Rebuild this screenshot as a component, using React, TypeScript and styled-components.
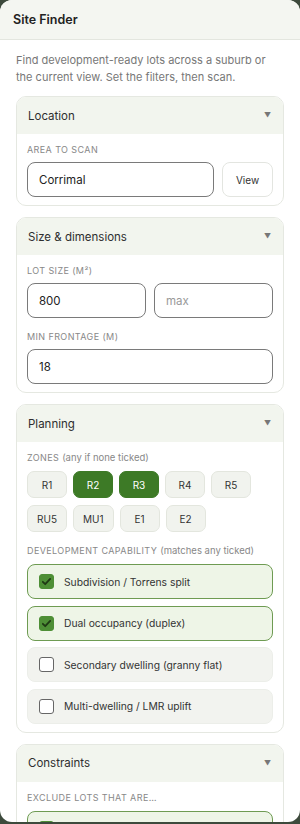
import styled, { createGlobalStyle } from 'styled-components'

const GlobalStyle = createGlobalStyle`
  * { box-sizing: border-box; }
  body {
    margin: 0;
    background: #3d4a3c;
    font-family: Inter, "Liberation Sans", sans-serif;
  }
`

const Panel = styled.div`
  width: 300px;
  height: 822px;
  background: #ffffff;
  border-radius: 12px;
  overflow: hidden;
`

const PanelHeader = styled.div`
  height: 40px;
  display: flex;
  align-items: center;
  padding: 0 13px;
  background: #f4f6f1;
  border-bottom: 1px solid #e3e6df;
  font-size: 12.5px;
  font-weight: 600;
  color: #222;
`

const PanelBody = styled.div`
  padding: 12px 16px;
  display: flex;
  flex-direction: column;
  gap: 11px;
`

const Intro = styled.p`
  margin: 0 0 -1px;
  font-size: 11px;
  line-height: 17px;
  color: #777;
`

const Card = styled.section`
  flex-shrink: 0;
  border: 1px solid #e5e8e1;
  border-radius: 10px;
  overflow: hidden;
`

const CardHeader = styled.div`
  height: 37px;
  display: flex;
  align-items: center;
  justify-content: space-between;
  padding: 0 12px 0 11px;
  background: #f2f5ee;
  font-size: 11.5px;
  color: #2e2e2e;
`

const Caret = styled.span`
  font-size: 7px;
  color: #777;
`

const CardBody = styled.div`
  padding: 9px 10px 8px;
  display: flex;
  flex-direction: column;
  gap: 12px;
`

const Field = styled.div`
  display: flex;
  flex-direction: column;
  gap: 6px;
`

const Label = styled.div`
  font-size: 9px;
  line-height: 13px;
  letter-spacing: 0.4px;
  text-transform: uppercase;
  color: #888;

  small {
    font-size: 9.5px;
    letter-spacing: 0;
    text-transform: none;
  }
`

const Row = styled.div<{ $cols: string }>`
  display: grid;
  grid-template-columns: ${p => p.$cols};
  gap: 8px;
`

const Input = styled.div<{ $placeholder?: boolean }>`
  height: 35px;
  display: flex;
  align-items: center;
  padding: 0 11px;
  border: 1px solid #7a7a7a;
  border-radius: 8px;
  font-size: 11.5px;
  color: ${p => (p.$placeholder ? '#999' : '#222')};
`

const Button = styled.div`
  height: 35px;
  display: flex;
  align-items: center;
  justify-content: center;
  border: 1px solid #e3e5e0;
  border-radius: 8px;
  font-size: 10px;
  color: #333;
`

const Chips = styled.div`
  display: flex;
  flex-wrap: wrap;
  gap: 7px 6px;
  margin-top: 1px;
`

const Chip = styled.div<{ $on?: boolean }>`
  min-width: 40px;
  height: 27px;
  padding: 0 9px;
  display: flex;
  align-items: center;
  justify-content: center;
  border-radius: 7px;
  font-size: 10px;
  background: ${p => (p.$on ? '#3d7a26' : '#f1f3ee')};
  border: 1px solid ${p => (p.$on ? '#3d7a26' : '#e3e6de')};
  color: ${p => (p.$on ? '#ffffff' : '#333')};
`

const Options = styled.div`
  display: flex;
  flex-direction: column;
  gap: 6.5px;
  margin-top: 1px;
`

const Option = styled.div<{ $on?: boolean }>`
  height: 35px;
  display: flex;
  align-items: center;
  gap: 10px;
  padding: 0 11px;
  border-radius: 8px;
  background: ${p => (p.$on ? '#eef5e7' : '#f2f3ef')};
  border: 1px solid ${p => (p.$on ? '#6e9b52' : '#eceee9')};
  font-size: 10.3px;
  color: #333;
`

const Box = styled.span<{ $on?: boolean }>`
  width: 15px;
  height: 15px;
  flex-shrink: 0;
  display: flex;
  align-items: center;
  justify-content: center;
  border-radius: 3px;
  background: ${p => (p.$on ? '#4e8f36' : '#ffffff')};
  border: 1px solid ${p => (p.$on ? '#4e8f36' : '#666')};
`

const Check = () => (
  <svg width="11" height="11" viewBox="0 0 12 12">
    <path d="M2 6.3l2.6 2.6L10 3.2" fill="none" stroke="#1f3a14" strokeWidth="2" strokeLinecap="round" strokeLinejoin="round" />
  </svg>
)

const zones = [
  { id: 'R1' }, { id: 'R2', on: true }, { id: 'R3', on: true }, { id: 'R4' }, { id: 'R5' },
  { id: 'RU5' }, { id: 'MU1' }, { id: 'E1' }, { id: 'E2' },
]

const capabilities = [
  { label: 'Subdivision / Torrens split', on: true },
  { label: 'Dual occupancy (duplex)', on: true },
  { label: 'Secondary dwelling (granny flat)' },
  { label: 'Multi-dwelling / LMR uplift' },
]

export default function App() {
  return (
    <>
      <GlobalStyle />
      <Panel>
        <PanelHeader>Site Finder</PanelHeader>
        <PanelBody>
          <Intro>
            Find development-ready lots across a suburb or the current view. Set the filters, then scan.
          </Intro>

          <Card>
            <CardHeader>Location<Caret>▼</Caret></CardHeader>
            <CardBody>
              <Field>
                <Label>Area to scan</Label>
                <Row $cols="1fr 51px">
                  <Input>Corrimal</Input>
                  <Button>View</Button>
                </Row>
              </Field>
            </CardBody>
          </Card>

          <Card>
            <CardHeader>Size &amp; dimensions<Caret>▼</Caret></CardHeader>
            <CardBody>
              <Field>
                <Label>Lot size (m²)</Label>
                <Row $cols="1fr 1fr">
                  <Input>800</Input>
                  <Input $placeholder>max</Input>
                </Row>
              </Field>
              <Field>
                <Label>Min frontage (m)</Label>
                <Input>18</Input>
              </Field>
            </CardBody>
          </Card>

          <Card>
            <CardHeader>Planning<Caret>▼</Caret></CardHeader>
            <CardBody>
              <Field>
                <Label>Zones <small>(any if none ticked)</small></Label>
                <Chips>
                  {zones.map(z => (
                    <Chip key={z.id} $on={z.on}>{z.id}</Chip>
                  ))}
                </Chips>
              </Field>
              <Field>
                <Label>Development capability <small>(matches any ticked)</small></Label>
                <Options>
                  {capabilities.map(c => (
                    <Option key={c.label} $on={c.on}>
                      <Box $on={c.on}>{c.on && <Check />}</Box>
                      {c.label}
                    </Option>
                  ))}
                </Options>
              </Field>
            </CardBody>
          </Card>

          <Card>
            <CardHeader>Constraints<Caret>▼</Caret></CardHeader>
            <CardBody>
              <Field>
                <Label>Exclude lots that are…</Label>
                <Options>
                  <Option $on>
                    <Box $on><Check /></Box>
                  </Option>
                </Options>
              </Field>
            </CardBody>
          </Card>
        </PanelBody>
      </Panel>
    </>
  )
}
